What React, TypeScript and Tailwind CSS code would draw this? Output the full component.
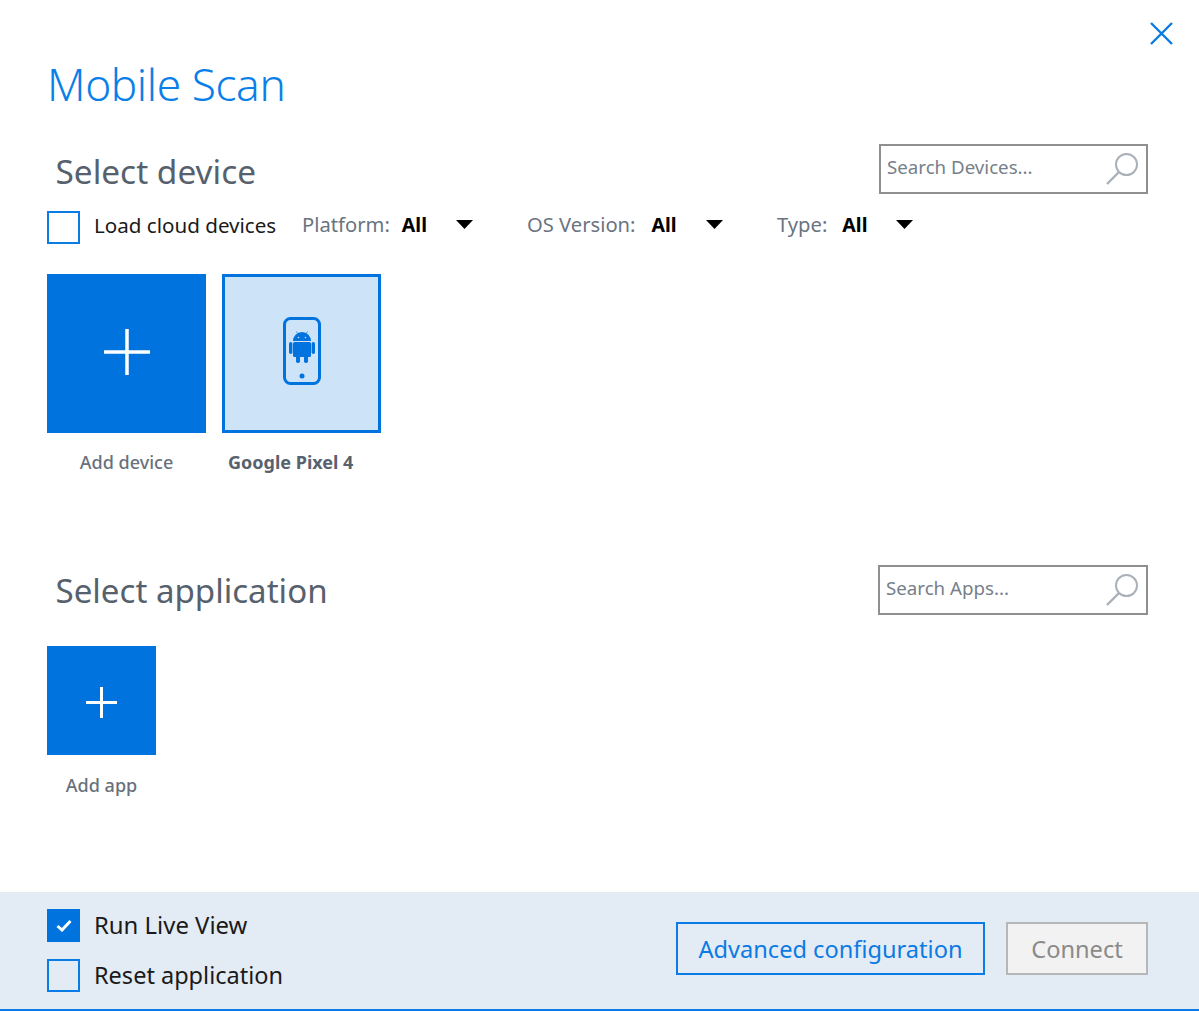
import React from "react";

const FONT = "font-['Noto_Sans','Open_Sans',sans-serif]";

function SearchIcon() {
  return (
    <svg width="36" height="36" viewBox="0 0 36 36" fill="none" stroke="#a9b0b7" strokeWidth="2">
      <circle cx="21.5" cy="13.5" r="10.5" />
      <path d="M14 21 L2 33" strokeWidth="2.4" />
    </svg>
  );
}

function SearchBox({ placeholder, w }: { placeholder: string; w: string }) {
  return (
    <div className={`${w} h-[50px] border-2 border-[#8f8f8f] flex items-center justify-between pl-[6px] pr-[5px]`}>
      <span className="text-[18.7px] text-[#76808a] leading-none pb-[4px]">{placeholder}</span>
      <SearchIcon />
    </div>
  );
}

function Filter({ label, className, allGap }: { label: string; className: string; allGap: string }) {
  return (
    <div className={`flex items-center ${className}`}>
      <span className="text-[20.2px] text-[#6a7480] leading-none">{label}</span>
      <span className={`${allGap} text-[19.5px] font-bold text-black leading-none`}>All</span>
      <svg className="ml-[29px]" width="17" height="9" viewBox="0 0 17 9">
        <path d="M0 0 H17 L8.5 9 Z" fill="#000" />
      </svg>
    </div>
  );
}

function Box() {
  return <div className="w-[33px] h-[33px] border-2 border-[#0a7ce6] shrink-0" />;
}

function Plus({ size, stroke }: { size: number; stroke: number }) {
  return (
    <svg width={size} height={size} viewBox={`0 0 ${size} ${size}`}>
      <path d={`M0 ${size / 2} H${size} M${size / 2} 0 V${size}`} stroke="#fff" strokeWidth={stroke} />
    </svg>
  );
}

function PhoneIcon() {
  return (
    <svg width="38" height="68" viewBox="0 0 38 68" fill="none">
      <rect x="1.5" y="1.5" width="35" height="65" rx="6" stroke="#0173de" strokeWidth="3" />
      <circle cx="19" cy="59" r="2.5" fill="#0173de" />
      <g fill="#0173de">
        <path d="M10 24 a9 9 0 0 1 18 0 Z" />
        <rect x="10" y="25" width="18" height="15" rx="1.5" />
        <rect x="6" y="25" width="3.4" height="12" rx="1.7" />
        <rect x="28.6" y="25" width="3.4" height="12" rx="1.7" />
        <rect x="13" y="38" width="4" height="8" rx="1.8" />
        <rect x="21" y="38" width="4" height="8" rx="1.8" />
      </g>
      <path d="M13.5 14.5 L15 17 M24.5 14.5 L23 17" stroke="#0173de" strokeWidth="0.7" />
      <circle cx="15.5" cy="20.5" r="0.8" fill="#cde3f8" />
      <circle cx="22.5" cy="20.5" r="0.8" fill="#cde3f8" />
    </svg>
  );
}

export default function App() {
  return (
    <div className={`${FONT} w-[1199px] h-[1011px] bg-white flex flex-col overflow-hidden`}>
      <div className="flex-1 flex flex-col pl-[47px] pr-[51px]">
        <div className="h-[144px] relative">
          <h1 className="pt-[52px] text-[44.2px] font-light leading-[64px] tracking-[-0.4px] text-[#0b7fe8]">Mobile Scan</h1>
          <svg className="absolute right-[-25px] top-[22px]" width="23" height="23" viewBox="0 0 23 23">
            <path d="M1 1 L22 22 M22 1 L1 22" stroke="#0b7be4" strokeWidth="2.4" />
          </svg>
        </div>

        <div className="flex items-center justify-between h-[50px]">
          <h2 className="pl-[8.5px] pt-[6px] text-[33.4px] leading-none text-[#56616d]">Select device</h2>
          <SearchBox placeholder="Search Devices..." w="w-[269px]" />
        </div>

        <div className="flex items-center h-[33px] mt-[17px]">
          <Box />
          <span className="ml-[14px] -mt-1 w-[208px] text-[20.6px] leading-none text-[#1a1a1a]">Load cloud devices</span>
          <Filter label="Platform:" allGap="ml-[12px]" className="w-[225px] -mt-[6px]" />
          <Filter label="OS Version:" allGap="ml-[16px]" className="w-[250px] -mt-[6px]" />
          <Filter label="Type:" allGap="ml-[15px]" className="-mt-[6px]" />
        </div>

        <div className="flex gap-[16px] mt-[30px]">
          <div className="w-[159px]">
            <div className="w-[159px] h-[159px] bg-[#0173de] flex items-center justify-center">
              <span className="-mt-[3px] flex">
                <Plus size={46} stroke={3.5} />
              </span>
            </div>
            <div className="mt-[17px] text-center text-[18px] leading-[24px] font-medium text-[#68717c]">Add device</div>
          </div>
          <div className="w-[159px]">
            <div className="w-[159px] h-[159px] bg-[#cde3f8] border-[3px] border-[#0173de] flex items-center justify-center">
              <span className="-mt-[6px]">
                <PhoneIcon />
              </span>
            </div>
            <div className="mt-[17px] pl-[6px] text-left text-[18px] leading-[24px] font-bold text-[#57626e] whitespace-nowrap">Google Pixel 4</div>
          </div>
        </div>

        <div className="flex items-center justify-between h-[50px] mt-[91px]">
          <h2 className="pl-[8.5px] pt-[2px] text-[33.1px] leading-none text-[#56616d]">Select application</h2>
          <SearchBox placeholder="Search Apps..." w="w-[270px]" />
        </div>

        <div className="w-[109px] mt-[31px]">
          <div className="w-[109px] h-[109px] bg-[#0173de] flex items-center justify-center">
            <span className="mt-[3px] flex">
              <Plus size={31} stroke={3} />
            </span>
          </div>
          <div className="mt-[18px] text-center text-[18px] leading-[24px] font-medium text-[#68717c]">Add app</div>
        </div>
      </div>

      <div className="h-[119px] bg-[#e3ebf5] border-b-2 border-[#0a7ce6] pl-[47px] pr-[51px] flex items-center justify-between">
        <div className="flex flex-col gap-[17px]">
          <div className="flex items-center">
            <div className="w-[33px] h-[33px] bg-[#0173de] flex items-center justify-center">
              <svg width="16" height="13" viewBox="0 0 16 13" fill="none">
                <path d="M1.5 7 L6 11 L14.5 2" stroke="#fff" strokeWidth="3" />
              </svg>
            </div>
            <span className="ml-[14px] -mt-[2px] text-[23.9px] leading-none text-[#1a1a1a]">Run Live View</span>
          </div>
          <div className="flex items-center">
            <Box />
            <span className="ml-[14px] text-[23.5px] leading-none text-[#1a1a1a]">Reset application</span>
          </div>
        </div>
        <div className="flex gap-[21px] mb-[5px]">
          <button className="w-[309px] h-[53px] pt-[4px] border-2 border-[#0a7ce6] text-[23.6px] leading-none text-[#0b7be4]">Advanced configuration</button>
          <button className="w-[142px] h-[53px] pt-[4px] border-2 border-[#b5b7b9] bg-[#f2f2f2] text-[23.6px] leading-none text-[#8a8a8a]">Connect</button>
        </div>
      </div>
    </div>
  );
}
